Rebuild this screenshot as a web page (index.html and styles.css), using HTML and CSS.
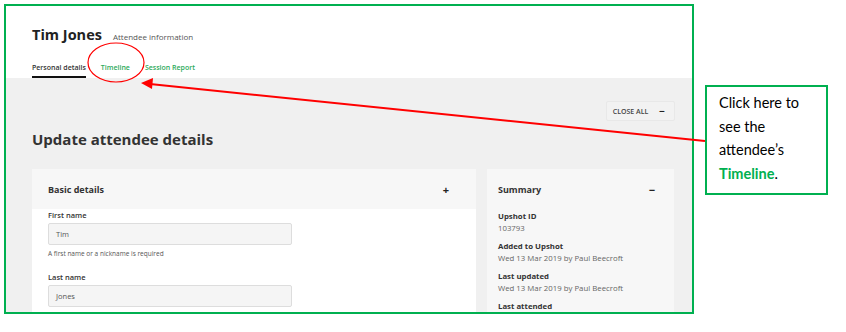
FILE: index.html
```html
<!DOCTYPE html>
<html lang="en">
<head>
	<meta charset="UTF-8">
	<link rel="stylesheet" href="styles.css">
	<title>Attendee information</title>
</head>
<body>
	<div class="shot">
		<div class="page-head">
			<div class="title-row">
				<h1>Tim Jones</h1>
				<span class="subtitle">Attendee information</span>
			</div>
			<div class="tabs">
				<a class="tab active">Personal details</a>
				<a class="tab">Timeline</a>
				<a class="tab">Session Report</a>
			</div>
		</div>
		<div class="page-body">
			<div class="toolbar">
				<button class="close-all">CLOSE ALL <span class="sign">&minus;</span></button>
			</div>
			<h2>Update attendee details</h2>
			<div class="columns">
				<div class="card basic">
					<div class="card-head">
						<span>Basic details</span>
						<span class="sign">+</span>
					</div>
					<div class="card-body">
						<label>First name</label>
						<div class="input">Tim</div>
						<p class="help">A first name or a nickname is required</p>
						<label>Last name</label>
						<div class="input">Jones</div>
					</div>
				</div>
				<div class="card summary">
					<div class="card-head">
						<span>Summary</span>
						<span class="sign">&minus;</span>
					</div>
					<dl>
						<dt>Upshot ID</dt>
						<dd>103793</dd>
						<dt>Added to Upshot</dt>
						<dd>Wed 13 Mar 2019 by Paul Beecroft</dd>
						<dt>Last updated</dt>
						<dd>Wed 13 Mar 2019 by Paul Beecroft</dd>
						<dt>Last attended</dt>
					</dl>
				</div>
			</div>
		</div>
	</div>

	<!-- annotation -->
	<svg class="marks" width="846" height="332" viewBox="0 0 846 332">
		<ellipse cx="116" cy="62.5" rx="28" ry="19.5" fill="none" stroke="#f00" stroke-width="1.2"/>
		<line x1="705" y1="141" x2="150" y2="84" stroke="#f00" stroke-width="2"/>
		<polygon points="141,83 153,78 152,89" fill="#f00"/>
	</svg>
	<div class="callout">
		Click here to see the attendee&rsquo;s <b>Timeline</b>.
	</div>
</body>
</html>
```

FILE: styles.css
```css
body {
	margin: 0;
	background: #fff;
	font-family: "Open Sans", "Noto Sans", sans-serif;
	color: #333;
}
.shot {
	margin: 4px 0 0 4px;
	width: 690px;
	height: 310px;
	border: 2px solid #00b050;
	box-sizing: border-box;
	overflow: hidden;
	display: flex;
	flex-direction: column;
}
.page-head {
	height: 72px;
	flex: none;
	padding: 18px 0 0 26px;
	box-sizing: border-box;
	background: #fff;
}
.title-row {
	display: flex;
	align-items: baseline;
	gap: 11px;
}
h1 {
	margin: 0;
	font-size: 14.5px;
	font-weight: 700;
	color: #222;
	line-height: 22px;
}
.subtitle {
	font-size: 8px;
	color: #555;
}
.tabs {
	display: flex;
	gap: 15px;
	margin-top: 17px;
}
.tab {
	font-size: 7px;
	font-weight: 600;
	color: #2daa5a;
	line-height: 10px;
	padding-bottom: 3px;
}
.tab.active {
	color: #333;
	border-bottom: 2px solid #111;
}
.page-body {
	flex: 1;
	background: #f0f0f0;
	padding: 23px 17px 0 26px;
}
.toolbar {
	display: flex;
	justify-content: flex-end;
}
.close-all {
	font-family: inherit;
	font-size: 7px;
	font-weight: 600;
	color: #444;
	background: #f2f2f2;
	border: 1px solid #e8e8e8;
	border-radius: 2px;
	height: 20px;
	padding: 0 9px 0 6px;
	display: flex;
	align-items: center;
	gap: 11px;
}
.close-all .sign {
	font-size: 10px;
	font-weight: 700;
	color: #222;
}
h2 {
	margin: 8px 0 0;
	font-size: 15px;
	font-weight: 700;
	color: #333;
	line-height: 20px;
}
.columns {
	display: flex;
	gap: 11px;
	margin-top: 20px;
}
.card {
	background: #f7f7f7;
}
.basic {
	width: 444px;
	background: #fff;
}
.summary {
	width: 187px;
	padding: 0 11px;
	box-sizing: border-box;
}
.card-head {
	height: 40px;
	display: flex;
	align-items: center;
	justify-content: space-between;
	font-size: 9px;
	font-weight: 700;
	color: #333;
}
.basic .card-head {
	background: #f7f7f7;
	padding: 0 27px 0 16px;
}
.summary .card-head {
	padding-right: 8px;
}
.card-head .sign {
	font-size: 11px;
	color: #222;
}
.card-body {
	padding: 0 0 0 16px;
}
label {
	display: block;
	font-size: 7.5px;
	font-weight: 600;
	color: #333;
	line-height: 12px;
}
.input {
	width: 244px;
	height: 22px;
	margin-top: 2px;
	box-sizing: border-box;
	background: #f5f5f5;
	border: 1px solid #ddd;
	border-radius: 2px;
	font-size: 7.5px;
	color: #555;
	padding-left: 7px;
	display: flex;
	align-items: center;
}
.help {
	margin: 4px 0 12px;
	font-size: 6.5px;
	color: #555;
	line-height: 10px;
}
dl {
	margin: 1px 0 0;
}
dt {
	font-size: 7.8px;
	font-weight: 700;
	color: #333;
	line-height: 12px;
}
dd {
	margin: 0 0 6px;
	font-size: 7.8px;
	color: #666;
	line-height: 12px;
}
.marks {
	position: absolute;
	left: 0;
	top: 0;
	pointer-events: none;
}
.callout {
	position: absolute;
	left: 705px;
	top: 85px;
	width: 123px;
	height: 110px;
	box-sizing: border-box;
	border: 2px solid #00b050;
	background: #fff;
	padding: 4px 8px 0 12px;
	font-family: Lato, "Liberation Sans", sans-serif;
	font-size: 14.5px;
	line-height: 23.5px;
	color: #000;
}
.callout b {
	color: #00b050;
}
```
